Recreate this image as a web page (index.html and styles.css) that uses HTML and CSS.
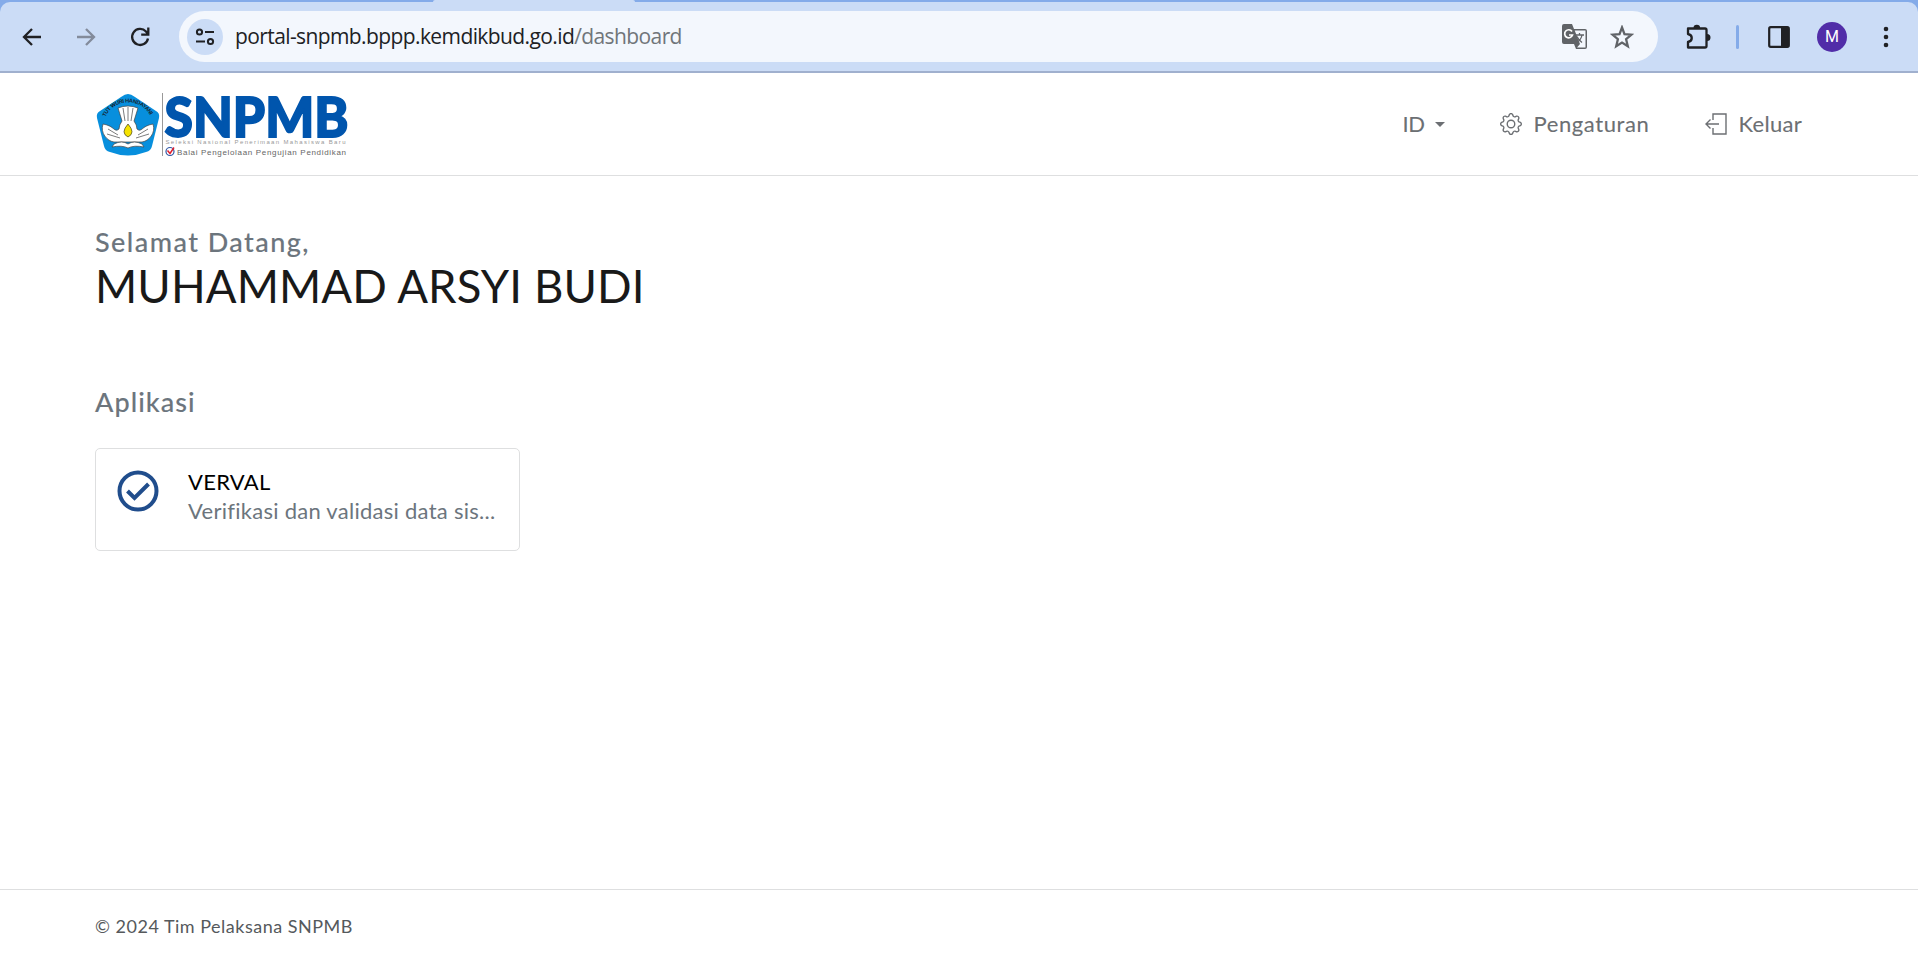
FILE: index.html
```html
<!DOCTYPE html>
<html lang="id">
<head>
<meta charset="utf-8">
<title>Portal SNPMB</title>
<link rel="stylesheet" href="styles.css">
</head>
<body>
<div class="tabstrip"><span class="active-tab"></span></div>
<div class="toolbar">
  <div class="nav-buttons">
    <svg width="22" height="22" viewBox="0 0 22 22" fill="none" stroke="#202124" stroke-width="2.3"><path d="M20 11H3M11 3l-8 8 8 8"/></svg>
    <svg width="22" height="22" viewBox="0 0 22 22" fill="none" stroke="#838b9b" stroke-width="2.3"><path d="M2 11h17M11 3l8 8-8 8"/></svg>
    <svg width="22" height="22" viewBox="0 0 22 22" fill="none" stroke="#202124" stroke-width="2.3"><path d="M19 12.500A8 8 0 1 1 17 5.500L19 8M19.300 1.500V8.600H12.200"/></svg>
  </div>
  <div class="address">
    <span class="site-info"><svg width="20" height="18" viewBox="0 0 20 18" fill="none" stroke="#202124" stroke-width="2"><circle cx="4.500" cy="4" r="2.600"/><path d="M10 4h9M1 13.500h9"/><circle cx="15.500" cy="13.500" r="2.600"/></svg></span>
    <span class="url">portal-snpmb.bppp.kemdikbud.go.id<span class="path">/dashboard</span></span>
    <svg class="translate" width="26" height="26" viewBox="0 0 26 26"><path d="M2 0h8l2 5h11a2 2 0 0 1 2 2v16a2 2 0 0 1-2 2H14l-2-5H2a2 2 0 0 1-2-2V2a2 2 0 0 1 2-2z" fill="#606367"/><path d="M12.700 6.500H23.500v17H15l3-3.500z" fill="#f3f7fd"/><path d="M10 7.500A4 4 0 1 0 10.500 11H7" fill="none" stroke="#fff" stroke-width="1.700"/><path d="M13.500 11h8.500M17.500 9v2M20 11c-.5 3-3 6-5 7M15 12.500c1 2.500 3 4.500 5 6" fill="none" stroke="#606367" stroke-width="1.300"/></svg>
    <svg width="24" height="24" viewBox="0 0 24 24" fill="none" stroke="#606367" stroke-width="2.300"><path d="M12 2.500l2.500 6.700 7 .5-5.400 4.500 1.700 7L12 17.500l-5.800 3.700 1.700-7-5.400-4.500 7-.5z"/></svg>
  </div>
  <svg class="puzzle" width="28" height="28" viewBox="0 0 28 28"><path d="M4 5.500h17a1.500 1.500 0 0 1 1.500 1.500v16a1.500 1.500 0 0 1-1.500 1.500H4v-5.500c5-1 5-7 0-8z" fill="none" stroke="#202124" stroke-width="2.300" stroke-linejoin="round"/><path d="M9.500 5a3.300 3.300 0 0 1 6.600 0zM23 11a3.500 3.500 0 0 1 0 7z" fill="#202124"/></svg>
  <span class="divider"></span>
  <svg class="panel" width="22" height="22" viewBox="0 0 22 22"><rect x="1.200" y="1.200" width="19.600" height="19.600" rx="1.500" fill="none" stroke="#202124" stroke-width="2.200"/><path d="M13 1h7v20h-7z" fill="#202124"/></svg>
  <span class="avatar">M</span>
  <svg width="6" height="22" viewBox="0 0 6 22" fill="#202124"><circle cx="3" cy="3" r="2.300"/><circle cx="3" cy="11" r="2.300"/><circle cx="3" cy="19" r="2.300"/></svg>
</div>
<header class="header">
  <svg class="logo" width="256" height="66" viewBox="0 0 256 66">
    <path d="M32 1q3 0 7 3L60 18q4 2 3 7L56 53q-1 5-6 6Q32 66 14 59q-5-1-6-6L1 25q-1-5 3-7L25 4q4-3 7-3z" fill="#078fdd"/>
    <path id="motto" d="M9.500 24C18 4.500 46 4.500 55 24" fill="none"/>
    <text class="motto"><textPath href="#motto" textLength="55">TUT WURI HANDAYANI</textPath></text>
    <g fill="#fff" stroke="#444" stroke-width=".7">
      <path d="M22 15q10-4 20 0l-4 13q3 4 3 8c5 4 4-3 16-5 3 9-4 17-11 18H18C11 48 4 40 7 31c12 2 11 9 16 5q0-4 3-8z"/>
      <path d="M18 51q8-4 14 0 6-4 14 0l2 3q-10-2-16 1-6-3-16-1z"/>
      <path d="M27 15l2 13M32 14v14M37 15l-2 13M12 36l10 6M11 41l13 4M52 36l-10 6M53 41l-13 4" fill="none"/>
    </g>
    <path d="M32 31q8 9 0 13-8-4 0-13z" fill="#f6e300" stroke="#222" stroke-width=".6"/>
    <path d="M66.500 0v63" stroke="#999"/>
    <text class="brand" x="68.500" y="43.500" textLength="184" lengthAdjust="spacingAndGlyphs">SNPMB</text>
    <text class="tag-one" x="69.500" y="50.500" textLength="180">Seleksi Nasional Penerimaan Mahasiswa Baru</text>
    <circle cx="74" cy="58.500" r="4" fill="#fff" stroke="#3157a5" stroke-width="1.200"/><path d="M71.500 57.500l2.500 3 4-6" fill="none" stroke="#e21d2c" stroke-width="1.500"/>
    <text class="tag-two" x="81" y="61.500" textLength="169">Balai Pengelolaan Pengujian Pendidikan</text>
  </svg>
  <nav class="menu">
    <a class="language">ID<i class="caret"></i></a>
    <a class="settings"><svg width="22" height="22" viewBox="0 0 16 16" fill="#6c6f73"><path d="M8 4.754a3.246 3.246 0 1 0 0 6.492 3.246 3.246 0 0 0 0-6.492zM5.754 8a2.246 2.246 0 1 1 4.492 0 2.246 2.246 0 0 1-4.492 0z"/><path d="M9.796 1.343c-.527-1.790-3.065-1.790-3.592 0l-.094.319a.873.873 0 0 1-1.255.520l-.292-.160c-1.640-.892-3.433.902-2.540 2.541l.159.292a.873.873 0 0 1-.520 1.255l-.319.094c-1.790.527-1.790 3.065 0 3.592l.319.094a.873.873 0 0 1 .520 1.255l-.160.292c-.892 1.640.901 3.434 2.541 2.540l.292-.159a.873.873 0 0 1 1.255.520l.094.319c.527 1.790 3.065 1.790 3.592 0l.094-.319a.873.873 0 0 1 1.255-.520l.292.160c1.640.893 3.434-.902 2.540-2.541l-.159-.292a.873.873 0 0 1 .520-1.255l.319-.094c1.790-.527 1.790-3.065 0-3.592l-.319-.094a.873.873 0 0 1-.520-1.255l.160-.292c.893-1.640-.902-3.433-2.541-2.540l-.292.159a.873.873 0 0 1-1.255-.520zm-2.633.283c.246-.835 1.428-.835 1.674 0l.094.319a1.873 1.873 0 0 0 2.693 1.115l.291-.160c.764-.415 1.600.420 1.184 1.185l-.159.292a1.873 1.873 0 0 0 1.116 2.692l.318.094c.835.246.835 1.428 0 1.674l-.319.094a1.873 1.873 0 0 0-1.115 2.693l.160.291c.415.764-.420 1.600-1.185 1.184l-.291-.159a1.873 1.873 0 0 0-2.693 1.116l-.094.318c-.246.835-1.428.835-1.674 0l-.094-.319a1.873 1.873 0 0 0-2.692-1.115l-.292.160c-.764.415-1.600-.420-1.184-1.185l.159-.291A1.873 1.873 0 0 0 1.945 8.930l-.319-.094c-.835-.246-.835-1.428 0-1.674l.319-.094A1.873 1.873 0 0 0 3.060 4.377l-.160-.292c-.415-.764.420-1.600 1.185-1.184l.292.159a1.873 1.873 0 0 0 2.692-1.115z"/></svg><span>Pengaturan</span></a>
    <a class="logout"><svg width="22" height="22" viewBox="0 0 22 22" fill="none" stroke="#6c6f73" stroke-width="1.400"><path d="M8 7V1h13v20H8v-6M14 11H1M5.500 6.500L1 11l4.500 4.500"/></svg><span>Keluar</span></a>
  </nav>
</header>
<main class="content">
  <p class="welcome">Selamat Datang,</p>
  <h1 class="name">MUHAMMAD ARSYI BUDI</h1>
  <h2 class="section-title">Aplikasi</h2>
  <a class="card">
    <svg class="check" width="42" height="42" viewBox="0 0 42 42" fill="none" stroke="#204d8c" stroke-width="4"><circle cx="21" cy="21" r="18.500"/><path d="M10.500 21l7 7 14-14"/></svg>
    <span class="card-text"><b class="card-title">VERVAL</b><span class="description">Verifikasi dan validasi data sis...</span></span>
  </a>
</main>
<footer class="footer"><span>© 2024 Tim Pelaksana SNPMB</span></footer>
</body>
</html>
```
FILE: styles.css
```css
* { box-sizing: border-box; }
body { margin: 0; height: 958px; display: flex; flex-direction: column; background: #fff; overflow: hidden; font-family: Lato, "Open Sans", sans-serif; }
svg { flex: none; }
.tabstrip { position: relative; z-index: 1; height: 2px; flex: none; background: #84abe9; padding-left: 433px; }
.active-tab { display: block; width: 202px; height: 2px; background: #cbdcf6; border-radius: 2px 2px 0 0; }
.toolbar { height: 71px; flex: none; display: flex; align-items: center; padding: 0 28px 0 21px; background: #cbdcf6; border-bottom: 2px solid #a0b0ce; border-radius: 10px 10px 0 0; box-shadow: 0 -10px 0 #84abe9; }
.nav-buttons { display: flex; gap: 32px; }
.address { width: 1479px; height: 51px; margin-left: 28px; padding: 0 24px 0 8px; border-radius: 26px; display: flex; align-items: center; background: #f3f7fd; }
.site-info { width: 36px; height: 36px; border-radius: 50%; display: flex; align-items: center; justify-content: center; background: #cbdcf6; }
.url { flex: 1; margin: -2px 0 0 12px; font: 21px "Open Sans", sans-serif; letter-spacing: -.6px; color: #202124; }
.path { color: #70757a; }
.translate { margin-right: 22px; }
.puzzle { margin-left: 26px; }
.divider { width: 3px; height: 24px; margin: 0 29px 0 24px; background: #84abe9; border-radius: 2px; }
.avatar { width: 30px; height: 30px; margin: 0 36px 0 27px; border-radius: 50%; background: #512da8; color: #fff; display: flex; align-items: center; justify-content: center; font: 400 16px Roboto, sans-serif; }
.header { height: 103px; flex: none; display: flex; align-items: center; justify-content: space-between; padding: 0 116px 0 96px; border-bottom: 1px solid #dedfe0; }
.logo { margin-top: 4px; overflow: visible; }
.motto { font: 700 5.500px "Liberation Sans", sans-serif; fill: #17232b; }
.brand { font: 900 55px Lato, sans-serif; fill: #0055ad; stroke: #0055ad; stroke-width: 1.800px; }
.tag-one { font: 6px "Liberation Sans", sans-serif; fill: #999; }
.tag-two { font: 8px "Liberation Sans", sans-serif; fill: #666; }
.menu { display: flex; color: #6c6f73; font-size: 22px; line-height: 28px; -webkit-text-stroke: .1px; }
.menu a { display: flex; align-items: center; }
.language { letter-spacing: -.4px; }
.caret { margin-left: 11px; border: 5px solid transparent; border-top-color: currentColor; border-bottom: 0; }
.settings { margin-left: 55px; gap: 11px; letter-spacing: .6px; }
.logout { margin-left: 56px; gap: 11px; letter-spacing: .3px; }
.content { flex: 1; padding: 49px 95px 0; }
.welcome { margin: 0; font-size: 27px; line-height: 34px; font-weight: 500; letter-spacing: 1.45px; color: #6c757d; -webkit-text-stroke: .1px; }
.name { margin: 0; font-size: 45.500px; line-height: 54px; font-weight: 400; letter-spacing: .1px; color: #191919; }
.section-title { margin: 72px 0 29px; font-size: 27px; line-height: 34px; font-weight: 500; letter-spacing: 1.05px; color: #6c757d; -webkit-text-stroke: .1px; }
.card { width: 425px; height: 103px; display: flex; padding: 21px; border: 1px solid #dedfe0; border-radius: 5px; }
.card-text { margin: -3px 0 0 29px; display: flex; flex-direction: column; white-space: nowrap; font-size: 22px; line-height: 29px; letter-spacing: .27px; color: #6c757d; }
.card-title { font-weight: 400; color: #000; }
.footer { height: 69px; flex: none; padding: 23px 95px; border-top: 1px solid #dedfe0; font-size: 18px; line-height: 26px; letter-spacing: .5px; color: #55595c; }
```
